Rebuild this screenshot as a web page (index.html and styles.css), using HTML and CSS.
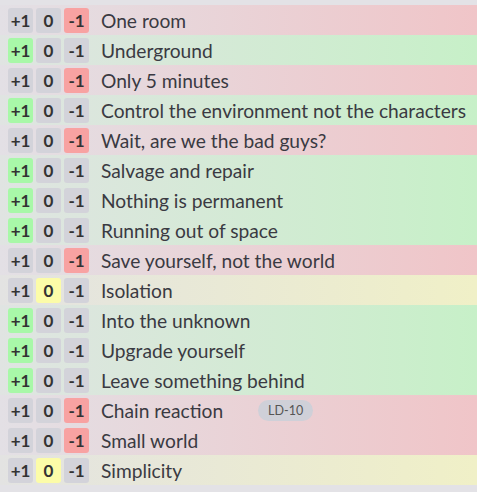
FILE: index.html
```html
<!DOCTYPE html>
<html lang="en">
<head>
    <meta charset="UTF-8">
    <title>Themes</title>
    <link rel="stylesheet" href="styles.css">
</head>
<body>
    <ul class="themes">
        <li class="theme down"><span class="vote">+1</span><span class="vote">0</span><span class="vote minus on">-1</span><span class="name">One room</span></li>
        <li class="theme up"><span class="vote plus on">+1</span><span class="vote">0</span><span class="vote">-1</span><span class="name">Underground</span></li>
        <li class="theme down"><span class="vote">+1</span><span class="vote">0</span><span class="vote minus on">-1</span><span class="name">Only 5 minutes</span></li>
        <li class="theme up"><span class="vote plus on">+1</span><span class="vote">0</span><span class="vote">-1</span><span class="name">Control the environment not the characters</span></li>
        <li class="theme down"><span class="vote">+1</span><span class="vote">0</span><span class="vote minus on">-1</span><span class="name">Wait, are we the bad guys?</span></li>
        <li class="theme up"><span class="vote plus on">+1</span><span class="vote">0</span><span class="vote">-1</span><span class="name">Salvage and repair</span></li>
        <li class="theme up"><span class="vote plus on">+1</span><span class="vote">0</span><span class="vote">-1</span><span class="name">Nothing is permanent</span></li>
        <li class="theme up"><span class="vote plus on">+1</span><span class="vote">0</span><span class="vote">-1</span><span class="name">Running out of space</span></li>
        <li class="theme down"><span class="vote">+1</span><span class="vote">0</span><span class="vote minus on">-1</span><span class="name">Save yourself, not the world</span></li>
        <li class="theme meh"><span class="vote">+1</span><span class="vote zero on">0</span><span class="vote">-1</span><span class="name">Isolation</span></li>
        <li class="theme up"><span class="vote plus on">+1</span><span class="vote">0</span><span class="vote">-1</span><span class="name">Into the unknown</span></li>
        <li class="theme up"><span class="vote plus on">+1</span><span class="vote">0</span><span class="vote">-1</span><span class="name">Upgrade yourself</span></li>
        <li class="theme up"><span class="vote plus on">+1</span><span class="vote">0</span><span class="vote">-1</span><span class="name">Leave something behind</span></li>
        <li class="theme down"><span class="vote">+1</span><span class="vote">0</span><span class="vote minus on">-1</span><span class="name">Chain reaction</span><span class="tag">LD-10</span></li>
        <li class="theme down"><span class="vote">+1</span><span class="vote">0</span><span class="vote minus on">-1</span><span class="name">Small world</span></li>
        <li class="theme meh"><span class="vote">+1</span><span class="vote zero on">0</span><span class="vote">-1</span><span class="name">Simplicity</span></li>
    </ul>
</body>
</html>
```

FILE: styles.css
```css
body {
    margin: 0;
    padding: 5px 0 0;
    background: #e3e2e6;
    font-family: 'Lato', sans-serif;
    color: #333;
}

.themes {
    list-style: none;
    margin: 0;
    padding: 0;
}

.theme {
    display: flex;
    align-items: center;
    height: 30px;
    padding-left: 8px;
    white-space: nowrap;
}

.theme.down {
    background: linear-gradient(to right, #e3e0e5, #f0c5c8);
}

.theme.up {
    background: linear-gradient(to right, #e0e4e2, #c7f0c8);
}

.theme.meh {
    background: linear-gradient(to right, #e3e3e2, #f0f0c7);
}

.vote {
    width: 25px;
    height: 25px;
    line-height: 25px;
    margin-right: 3px;
    text-align: center;
    border-radius: 3px;
    background: #d3d3da;
    font-size: 17px;
    font-weight: 700;
    color: #333;
}

.vote.plus.on {
    background: #a8f8a8;
}

.vote.minus.on {
    background: #f8a2a2;
}

.vote.zero.on {
    background: #fcfca8;
}

.name {
    margin-left: 9px;
    font-size: 19.2px;
    color: #3a3a42;
}

.tag {
    margin-left: 35px;
    padding: 0 10px;
    height: 21px;
    line-height: 21px;
    border-radius: 11px;
    background: #cfd0d8;
    color: #555;
    font-size: 12.5px;
}
```
